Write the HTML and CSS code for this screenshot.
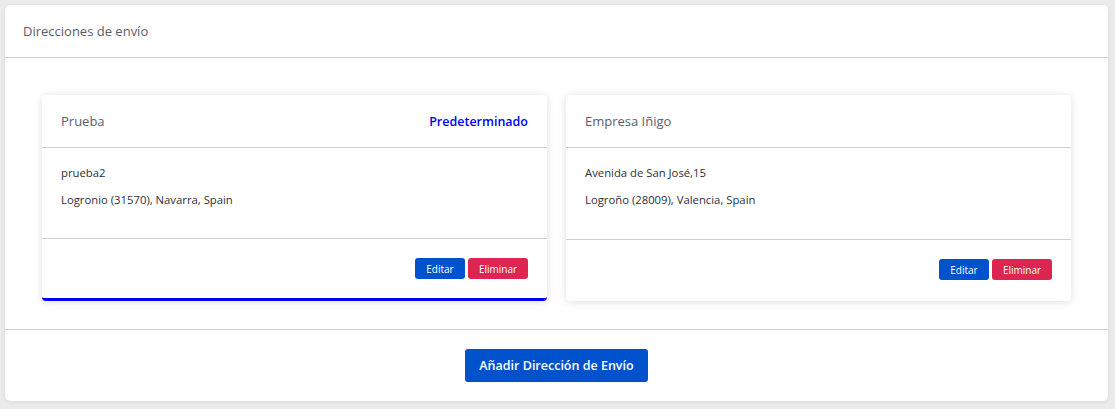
FILE: index.html
```html
<!DOCTYPE html>
<html lang="es">
<head>
<meta charset="utf-8">
<title>Direcciones de envío</title>
<link rel="stylesheet" href="styles.css">
</head>
<body>
<section class="panel">
  <header class="panel-head">Direcciones de envío</header>
  <div class="panel-body">
    <article class="addr addr-default">
      <div class="addr-head">
        <span class="addr-title">Prueba</span>
        <span class="addr-badge">Predeterminado</span>
      </div>
      <div class="addr-body">
        <p>prueba2</p>
        <p>Logronio (31570), Navarra, Spain</p>
      </div>
      <div class="addr-foot">
        <button class="btn btn-edit">Editar</button>
        <button class="btn btn-del">Eliminar</button>
      </div>
    </article>
    <article class="addr">
      <div class="addr-head">
        <span class="addr-title">Empresa Iñigo</span>
      </div>
      <div class="addr-body">
        <p>Avenida de San José,15</p>
        <p>Logroño (28009), Valencia, Spain</p>
      </div>
      <div class="addr-foot">
        <button class="btn btn-edit">Editar</button>
        <button class="btn btn-del">Eliminar</button>
      </div>
    </article>
  </div>
  <footer class="panel-foot">
    <button class="btn-add">Añadir Dirección de Envío</button>
  </footer>
</section>
</body>
</html>
```
FILE: styles.css
```css
* { box-sizing: border-box; }
html, body { margin: 0; }
body {
  background: #ebebeb;
  padding: 5px 7px 8px 5px;
  font-family: "Open Sans", "Noto Sans", sans-serif;
  color: #3b3d47;
}
.panel {
  background: #fff;
  border-radius: 5px;
  box-shadow: 0 1px 4px rgba(0,0,0,0.08);
}
.panel-head {
  height: 53px;
  padding: 0 18px;
  display: flex;
  align-items: center;
  font-size: 13px;
  color: #5a5e6b;
  border-bottom: 1px solid #cfcfcf;
}
.panel-body {
  display: grid;
  grid-template-columns: 1fr 1fr;
  gap: 19px;
  padding: 37px 37px 28px;
}
.addr {
  background: #fff;
  border-radius: 4px;
  box-shadow: 0 1px 9px rgba(0,0,0,0.13);
  display: flex;
  flex-direction: column;
  border-bottom: 2px solid transparent;
}
.addr-default { border-bottom: 3px solid #0000f5; }
.addr-head {
  height: 53px;
  padding: 0 19px;
  display: flex;
  align-items: center;
  justify-content: space-between;
  border-bottom: 1px solid #cfcfcf;
}
.addr-title { font-size: 13px; color: #5a5e6b; }
.addr-badge { font-size: 12.5px; color: #0000f5; font-weight: 600; }
.addr-body {
  flex: 1;
  padding: 17px 19px 30px;
  display: flex;
  flex-direction: column;
  gap: 11px;
  border-bottom: 1px solid #cfcfcf;
}
.addr-body p {
  margin: 0;
  font-size: 11.3px;
  line-height: 16px;
  color: #2d2f38;
}
.addr-foot {
  display: flex;
  justify-content: flex-end;
  gap: 3px;
  padding: 19px 19px 19px;
}
.btn {
  border: none;
  border-radius: 3px;
  color: #fff;
  font-family: inherit;
  font-size: 10px;
  font-weight: 500;
  height: 21px;
  padding: 0 8px;
}
.btn-edit { background: #0052cc; width: 50px; }
.btn-del { background: #dc2651; width: 60px; }
.panel-foot {
  border-top: 1px solid #cfcfcf;
  display: flex;
  justify-content: center;
  padding: 19px 0 19px;
}
.btn-add {
  background: #0052cc;
  color: #fff;
  border: none;
  border-radius: 3px;
  font-family: inherit;
  font-size: 12.5px;
  font-weight: 600;
  height: 33px;
  width: 183px;
}
```
